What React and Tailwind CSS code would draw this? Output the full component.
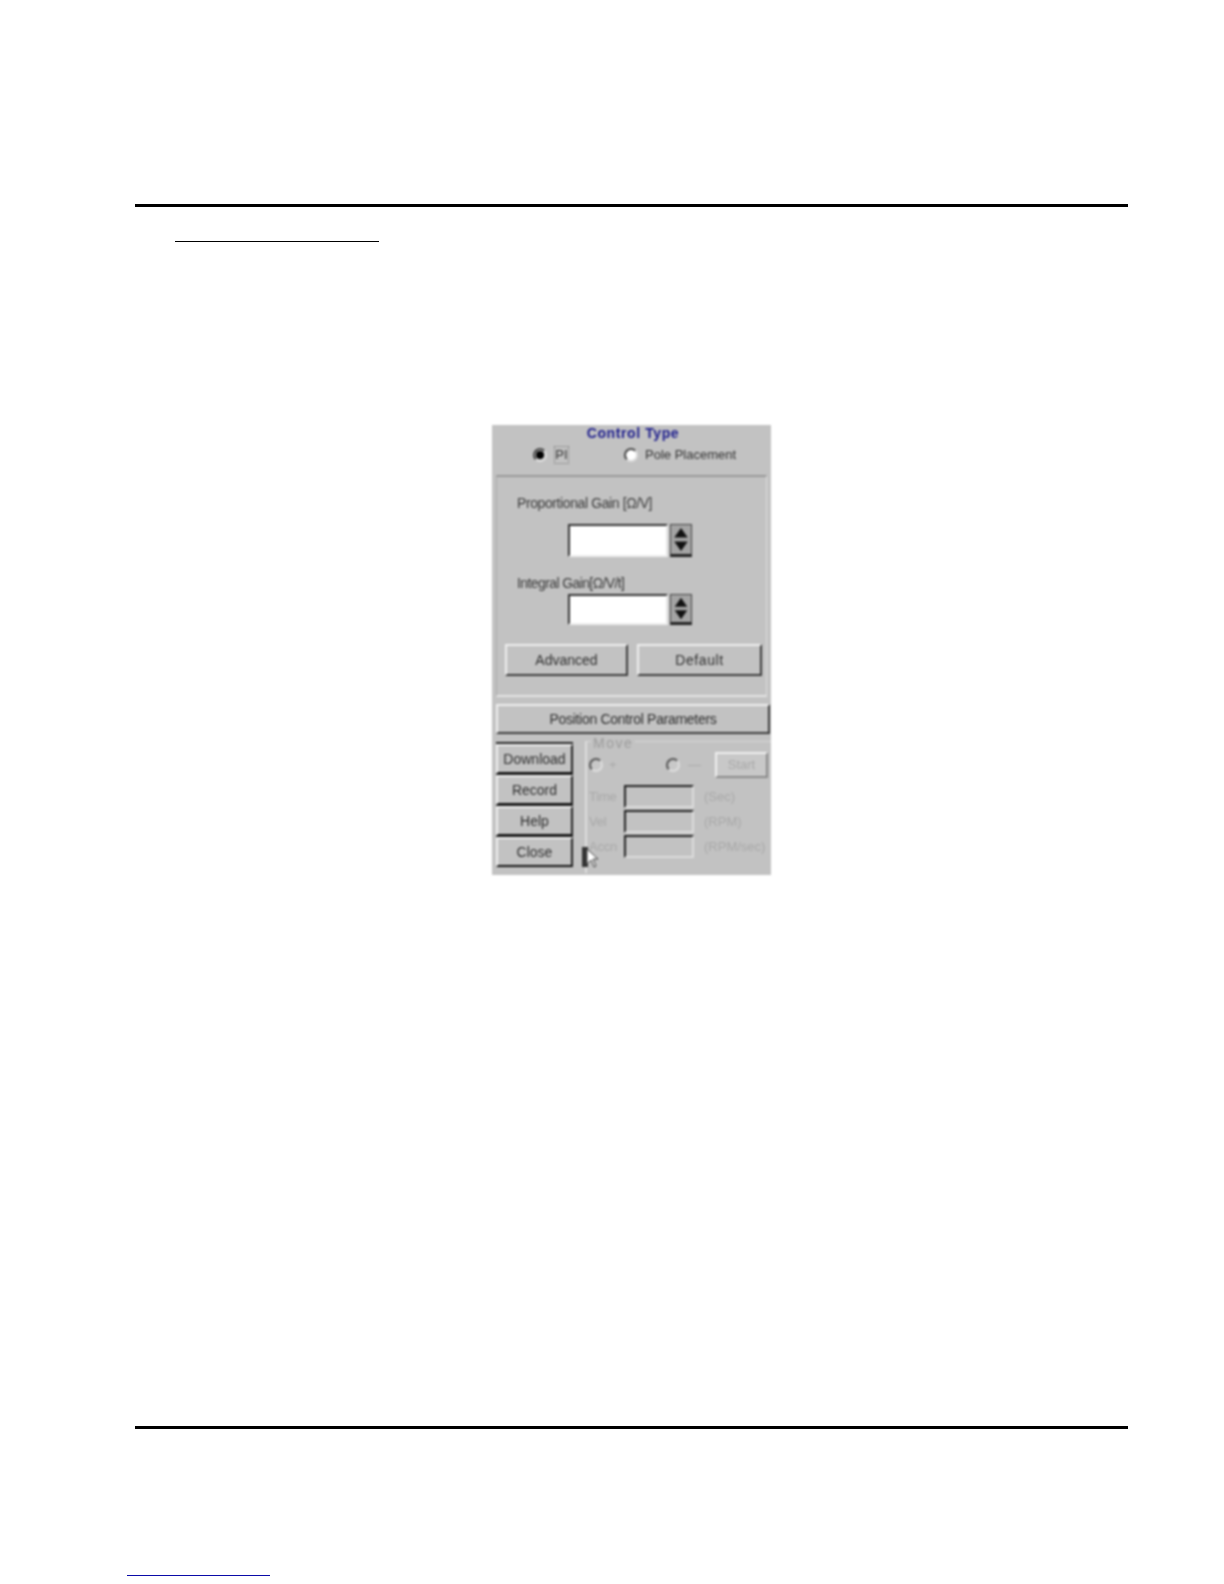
const font = { fontFamily: '"Liberation Sans", Arial, sans-serif' };

function Raised({ className = '', children }) {
  return (
    <div className={`flex items-center justify-center bg-[#c2c2c2] border-2 border-t-[#efefef] border-l-[#efefef] border-r-[#3a3a3a] border-b-[#3a3a3a] text-[#2e2e2e] text-[14px] ${className}`}>
      {children}
    </div>
  );
}

function Radio({ checked, muted }) {
  return (
    <span className={`w-[14px] h-[14px] rounded-full border-2 flex items-center justify-center shrink-0 ${muted ? 'border-t-[#555] border-l-[#555] border-r-[#ddd] border-b-[#ddd] bg-[#c8c8c8]' : 'border-t-[#444] border-l-[#444] border-r-[#ddd] border-b-[#ddd] bg-white'} ${checked ? '!bg-[#c2c2c2]' : ''}`}>
      {checked && <span className="w-2 h-2 rounded-full bg-black" />}
    </span>
  );
}

function Spinner() {
  return (
    <div className="w-[22px] h-full bg-[#a4a4a4] border border-[#444] border-b-[3px] border-b-[#222] shrink-0">
      <svg viewBox="0 0 20 30" className="w-full h-full">
        <path d="M10 3 L17 13 L3 13 Z" fill="#111" />
        <path d="M3 17 L17 17 L10 27 Z" fill="#111" />
      </svg>
    </div>
  );
}

function GainField({ height }) {
  return (
    <div className={`ml-[71px] flex gap-0.5 ${height}`}>
      <div className="w-[100px] h-full bg-white border-2 border-t-[#333] border-l-[#333] border-r-[#e8e8e8] border-b-[#eeeeee]" />
      <Spinner />
    </div>
  );
}

function MoveRow({ label, unit, mt }) {
  return (
    <div className={`flex items-center h-[23px] ${mt}`}>
      <span className="w-[37px] pl-[2px] text-[13px] tracking-[-0.2px] text-[#a8a8a8]">{label}</span>
      <div className="w-[70px] h-full bg-[#c2c2c2] border-2 border-t-[#222] border-l-[#222] border-r-[#dcdcdc] border-b-[#dcdcdc]" />
      <span className="ml-[10px] text-[13px] text-[#a8a8a8] whitespace-nowrap">{unit}</span>
    </div>
  );
}

function ControlPanel() {
  return (
    <div className="relative ml-[492px] mt-[183px] w-[279px] h-[450px] bg-[#c2c2c2] overflow-hidden blur-[0.8px]">
      <div className="h-[50px]">
        <div className="text-center text-[14px] font-bold leading-[16px] tracking-[0.6px] text-[#1a1a8c] ml-[3px]">Control Type</div>
        <div className="flex items-center h-[20px] mt-[4px] pl-[41px] text-[13px] text-[#333]">
          <Radio checked />
          <span className="ml-[7px] w-[15px] h-[18px] border border-dotted border-[#777] text-center leading-[16px]">PI</span>
          <span className="ml-[55px]"><Radio /></span>
          <span className="ml-[7px]">Pole Placement</span>
        </div>
      </div>

      <div className="mx-[4px] h-[222px] pt-[17px] border-t-2 border-t-[#999] border-b-2 border-b-[#e4e4e4] border-l border-l-[#aaa] border-r border-r-[#ddd]">
        <div className="ml-[20px] h-[18px] leading-[18px] text-[14px] tracking-[-0.4px] text-[#3a3a3a] whitespace-nowrap">Proportional Gain [Ω/V]</div>
        <div className="mt-[12px]"><GainField height="h-[33px]" /></div>
        <div className="mt-[17px] ml-[20px] h-[18px] leading-[18px] text-[14px] tracking-[-0.6px] text-[#3a3a3a] whitespace-nowrap">Integral Gain[Ω/V/t]</div>
        <div className="mt-[2px]"><GainField height="h-[31px]" /></div>
        <div className="flex gap-[9px] mt-[19px] ml-[8px]">
          <Raised className="w-[123px] h-[32px]">Advanced</Raised>
          <Raised className="w-[125px] h-[32px] tracking-[0.6px]">Default</Raised>
        </div>
      </div>

      <Raised className="ml-[4px] mt-[7px] h-[30px] w-[274px] tracking-[-0.3px]">Position Control Parameters</Raised>

      <div className="flex mt-[7px] pl-[4px]">
        <div className="w-[77px] mt-[1px] self-start flex flex-col gap-px bg-[#222] border-t-2 border-[#222]">
          {['Download', 'Record', 'Help', 'Close'].map(name => (
            <Raised key={name} className="h-[30px] !border-b-[#111] !border-r-[#222]">{name}</Raised>
          ))}
        </div>

        <div className="relative ml-[12px] flex-1 border-l-2 border-l-[#dedede] border-t border-t-[#d8d8d8] h-[132px]">
          <span className="absolute -top-[6px] left-[4px] px-[2px] bg-[#c2c2c2] text-[14px] leading-[14px] tracking-[1.5px] text-[#9c9c9c]">Move</span>
          <div className="flex items-center h-[26px] mt-[10px] pl-[2px]">
            <Radio muted />
            <span className="ml-[6px] w-[8px] text-[13px] text-[#a8a8a8]">+</span>
            <span className="ml-[49px]"><Radio muted /></span>
            <span className="ml-[8px] w-[13px] text-[13px] text-[#a8a8a8]">—</span>
            <div className="ml-[14px] w-[53px] h-[26px] shrink-0 flex items-center justify-center bg-[#c8c8c8] border-2 border-t-[#f0f0f0] border-l-[#f0f0f0] border-r-[#8a8a8a] border-b-[#8a8a8a] text-[13px] text-[#a8a8a8]">Start</div>
          </div>
          <div className="mt-[7px]">
            <MoveRow label="Time" unit="(Sec)" />
            <MoveRow label="Vel" unit="(RPM)" mt="mt-[2px]" />
            <MoveRow label="Accn" unit="(RPM/sec)" mt="mt-[2px]" />
          </div>
        </div>
      </div>

      {/* mouse pointer sitting over the group box edge */}
      <div className="absolute left-[90px] top-[422px] w-[6px] h-[20px] bg-[#333]" />
      <svg viewBox="0 0 14 22" className="absolute left-[94px] top-[423px] w-[14px] h-[22px]">
        <path d="M1 1 L1 16 L5 12 L8 19 L10 18 L7 11 L12 11 Z" fill="#fff" stroke="#444" strokeWidth="1" />
      </svg>
    </div>
  );
}

export default function App() {
  return (
    <div className="relative w-[1224px] h-[1584px] bg-white overflow-hidden" style={font}>
      <div className="h-[204px]" />
      <div className="ml-[135px] w-[993px] h-[3px] bg-black" />
      <div className="ml-[175px] mt-[34px] w-[204px] h-px bg-black" />
      <ControlPanel />
      <div className="ml-[135px] mt-[551px] w-[993px] h-[3px] bg-black" />
      <div className="ml-[127px] mt-[146px] w-[143px] h-px bg-[#0b0ba8]" />
    </div>
  );
}
